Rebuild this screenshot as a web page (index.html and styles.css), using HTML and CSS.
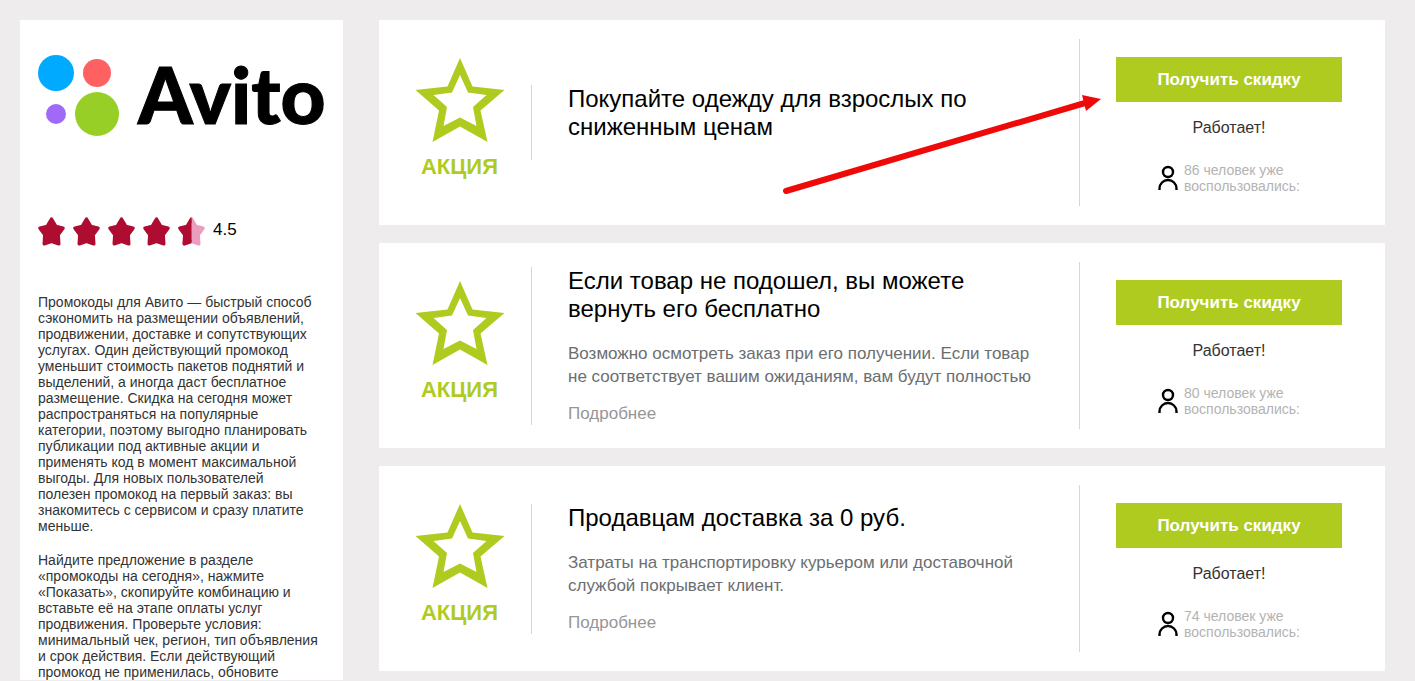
FILE: index.html
```html
<!DOCTYPE html>
<html lang="ru">
<head>
    <meta charset="UTF-8">
    <meta name="viewport" content="width=device-width, initial-scale=1.0">
    <title>Промокоды Авито</title>
    <link rel="stylesheet" href="styles.css">
</head>
<body>
    <!-- Shared icons -->
    <svg class="icon-defs" aria-hidden="true">
        <symbol id="icon-rate" viewBox="0 0 27 29">
            <path d="M13.500 2L17.800 9.300L25 11.200L20.200 17.700L20.800 26.800L13.500 24.400L6.200 26.800L6.800 17.700L2 11.200L9.200 9.300Z" stroke-width="3.400" stroke-linejoin="round"/>
        </symbol>
        <symbol id="icon-promo" viewBox="0 0 90 86">
            <path fill-rule="evenodd" d="M45 1L57.500 29.500L89.500 33L65.500 53.500L72.500 85L45 69.500L17.500 85L24 53.500L0.500 33L32.500 29.500ZM45 18L37 35.500L18.500 38L32 50L28.500 69L45 60.500L61.500 69L58 50L71.500 38L53 35.500Z"/>
        </symbol>
        <symbol id="icon-user" viewBox="0 0 20 26">
            <circle cx="10" cy="7" r="5" fill="none" stroke-width="2.400"/>
            <path d="M1.500 25v-1.500a8.500 8.500 0 0 1 17 0V25" fill="none" stroke-width="2.400"/>
        </symbol>
    </svg>

    <div class="container">
        <!-- Shop info -->
        <aside class="sidebar">
            <svg class="logo" viewBox="0 0 287 82" role="img" aria-label="Avito">
                <circle cx="18" cy="18" r="18" fill="#00aaff"/>
                <circle cx="59" cy="18" r="14" fill="#ff6163"/>
                <circle cx="18" cy="59" r="10" fill="#a169f7"/>
                <circle cx="59" cy="59" r="22" fill="#97cf26"/>
                <text class="logo-text" x="100" y="69">Avito</text>
            </svg>

            <div class="rating">
                <svg class="rate-star"><use href="#icon-rate"/></svg>
                <svg class="rate-star"><use href="#icon-rate"/></svg>
                <svg class="rate-star"><use href="#icon-rate"/></svg>
                <svg class="rate-star"><use href="#icon-rate"/></svg>
                <span class="rate-half">
                    <svg class="rate-star rate-star-light"><use href="#icon-rate"/></svg>
                    <svg class="rate-star rate-star-left"><use href="#icon-rate"/></svg>
                </span>
                <span class="rating-value">4.5</span>
            </div>

            <div class="description">
                <p>Промокоды для Авито — быстрый способ сэкономить на размещении объявлений, продвижении, доставке и сопутствующих услугах. Один действующий промокод уменьшит стоимость пакетов поднятий и выделений, а иногда даст бесплатное размещение. Скидка на сегодня может распространяться на популярные категории, поэтому выгодно планировать публикации под активные акции и применять код в момент максимальной выгоды. Для новых пользователей<br>полезен промокод на первый заказ: вы<br>знакомитесь с сервисом и сразу платите<br>меньше.</p>
                <p>Найдите предложение в разделе «промокоды на сегодня», нажмите «Показать», скопируйте комбинацию и вставьте её на этапе оплаты услуг продвижения. Проверьте условия: минимальный чек, регион, тип объявления и срок действия. Если действующий промокод не применилась, обновите</p>
            </div>
        </aside>

        <!-- Offers -->
        <main class="offers">
            <article class="card">
                <div class="card-type">
                    <svg class="promo-star"><use href="#icon-promo"/></svg>
                    <span>АКЦИЯ</span>
                </div>
                <div class="card-info">
                    <h2>Покупайте одежду для взрослых по сниженным ценам</h2>
                </div>
                <div class="card-action">
                    <button type="button" class="button">Получить скидку</button>
                    <p class="status">Работает!</p>
                    <div class="used">
                        <svg class="user-icon"><use href="#icon-user"/></svg>
                        <span>86 человек уже<br>воспользовались:</span>
                    </div>
                </div>
                <svg class="arrow" viewBox="0 0 320 100" aria-hidden="true">
                    <path class="arrow-line" d="M5 96L304 8"/>
                    <path class="arrow-head" d="M301 0L320 4L305 16Z"/>
                </svg>
            </article>

            <article class="card">
                <div class="card-type">
                    <svg class="promo-star"><use href="#icon-promo"/></svg>
                    <span>АКЦИЯ</span>
                </div>
                <div class="card-info">
                    <h2>Если товар не подошел, вы можете вернуть его бесплатно</h2>
                    <p>Возможно осмотреть заказ при его получении. Если товар не соответствует вашим ожиданиям, вам будут полностью</p>
                    <a href="#" class="more">Подробнее</a>
                </div>
                <div class="card-action">
                    <button type="button" class="button">Получить скидку</button>
                    <p class="status">Работает!</p>
                    <div class="used">
                        <svg class="user-icon"><use href="#icon-user"/></svg>
                        <span>80 человек уже<br>воспользовались:</span>
                    </div>
                </div>
            </article>

            <article class="card">
                <div class="card-type">
                    <svg class="promo-star"><use href="#icon-promo"/></svg>
                    <span>АКЦИЯ</span>
                </div>
                <div class="card-info">
                    <h2>Продавцам доставка за 0 руб.</h2>
                    <p>Затраты на транспортировку курьером или доставочной службой покрывает клиент.</p>
                    <a href="#" class="more">Подробнее</a>
                </div>
                <div class="card-action">
                    <button type="button" class="button">Получить скидку</button>
                    <p class="status">Работает!</p>
                    <div class="used">
                        <svg class="user-icon"><use href="#icon-user"/></svg>
                        <span>74 человек уже<br>воспользовались:</span>
                    </div>
                </div>
            </article>
        </main>
    </div>
</body>
</html>
```

FILE: styles.css
```css
* {
    box-sizing: border-box;
}
body {
    font-family: "Liberation Sans", Arial, sans-serif;
    background-color: #eeeced;
    margin: 0;
    color: #333;
}
h2, p {
    margin: 0;
}
.icon-defs {
    display: none;
}
.container {
    display: flex;
    gap: 36px;
    padding: 20px 30px 0 20px;
}

/* Sidebar */
.sidebar {
    flex: 0 0 323px;
    padding: 35px 18px 0;
    background-color: #fff;
}
.logo {
    display: block;
    width: 100%;
    margin-bottom: 80px;
    overflow: visible;
}
.logo-text {
    font-family: Lato, sans-serif;
    font-size: 78px;
    font-weight: 900;
    fill: #000;
    stroke: #000;
    stroke-width: 1px;
}

/* Rating */
.rating {
    display: flex;
    align-items: center;
    gap: 8px;
    margin-bottom: 48px;
}
.rate-star {
    display: block;
    width: 27px;
    height: 29px;
    fill: #af0c32;
    stroke: #af0c32;
}
.rate-half {
    position: relative;
}
.rate-star-light {
    fill: #eb9dc0;
    stroke: #eb9dc0;
}
.rate-star-left {
    position: absolute;
    top: 0;
    left: 0;
    clip-path: inset(0 50% 0 0);
}
.rating-value {
    font-size: 17px;
    line-height: 24px;
    padding-bottom: 4px;
    color: #000;
}
.description p {
    font-size: 14px;
    line-height: 16px;
}
.description p + p {
    margin-top: 18px;
}

/* Offer cards */
.offers {
    flex: 1;
    display: flex;
    flex-direction: column;
    gap: 18px;
}
.card {
    position: relative;
    display: flex;
    align-items: center;
    padding: 19px 0;
    background-color: #fff;
}
.card-type {
    flex: 0 0 152px;
    display: flex;
    flex-direction: column;
    align-items: center;
    gap: 10px;
    padding: 0 0 7px 9px;
    font-size: 22px;
    line-height: 28px;
    font-weight: bold;
    color: #afcb1f;
}
.promo-star {
    width: 90px;
    height: 86px;
    fill: #afcb1f;
}
.card-info {
    flex: 1;
    padding: 0 36px;
    border-left: 1px solid #d6d6d6;
}
.card-info h2 {
    font-size: 24px;
    line-height: 28px;
    font-weight: normal;
    color: #000;
    margin-bottom: 19px;
}
.card-info p {
    font-size: 17px;
    line-height: 23px;
    color: #6b6e70;
    margin-bottom: 15px;
}
.more {
    display: block;
    font-size: 17px;
    line-height: 22px;
    color: #969696;
    text-decoration: none;
}
.card-action {
    flex: 0 0 306px;
    display: flex;
    flex-direction: column;
    align-items: center;
    padding: 18px 43px 12px 36px;
    border-left: 1px solid #d6d6d6;
}
.button {
    width: 100%;
    height: 45px;
    font-family: inherit;
    font-size: 17px;
    font-weight: bold;
    color: #fff;
    background-color: #afcb1f;
    border: none;
    cursor: pointer;
}
.button:hover {
    background-color: #9db61c;
}
.status {
    font-size: 16px;
    line-height: 18px;
    margin: 17px 0 25px;
}
.used {
    display: flex;
    align-items: center;
    gap: 6px;
    font-size: 14px;
    line-height: 16px;
    color: #b3b3b3;
}
.user-icon {
    width: 20px;
    height: 26px;
    stroke: #000;
}

/* Pointer to the first button */
.arrow {
    position: absolute;
    top: 75px;
    right: 284px;
    width: 320px;
    height: 100px;
    pointer-events: none;
}
.arrow-line {
    stroke: #ef0a0a;
    stroke-width: 6;
    stroke-linecap: round;
}
.arrow-head {
    fill: #ef0a0a;
}
```
